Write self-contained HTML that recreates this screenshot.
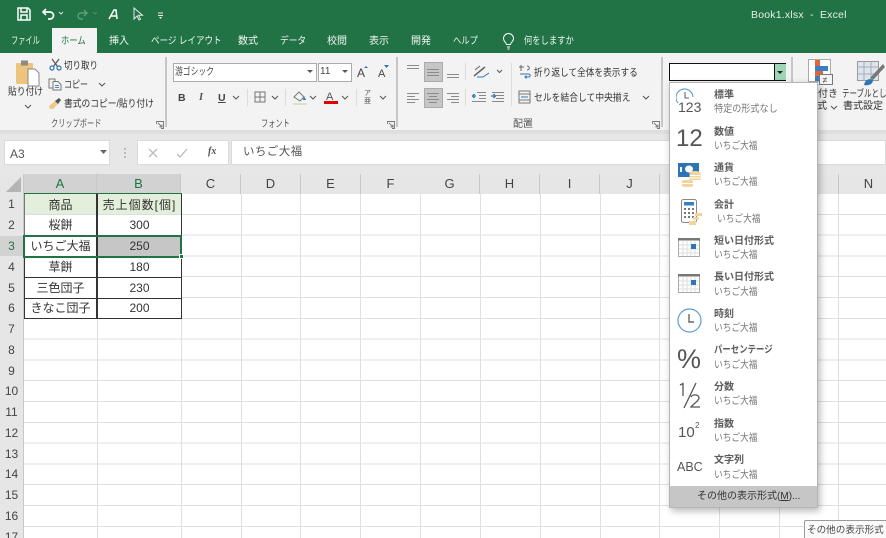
<!DOCTYPE html>
<html lang="ja"><head><meta charset="utf-8"><title>Book1.xlsx - Excel</title>
<style>
html,body{margin:0;padding:0;background:#fff}
#r{position:relative;width:886px;height:538px;overflow:hidden;background:#fff;font-family:"Liberation Sans","Noto Sans CJK JP",sans-serif;font-size:10px;color:#333;filter:blur(.3px)}
#r div,#r svg{position:absolute}
.t{white-space:nowrap;line-height:14px;transform-origin:0 50%}
.tab{color:#fff;top:35px;font-size:10px;height:14px;line-height:14px;white-space:nowrap;opacity:.93;transform-origin:0 50%}
.g{color:#555;top:118px;font-size:10px;line-height:14px;white-space:nowrap;transform-origin:0 50%}
.sep{width:2px;background:#c6c6c6;top:57px;height:70px}
.ss{width:1px;background:#dcdcdc}
.hd{top:174px;height:20px;background:#e6e6e6;border-right:1px solid #c8c8c8;text-align:center;font-size:13px;line-height:20px;color:#444;box-sizing:border-box}
.rh{left:0;width:23px;height:20px;background:#e6e6e6;text-align:center;font-size:12px;line-height:21px;color:#444}
.vl{top:194px;bottom:0;width:1px;background:#dfdfdf}
.c{font-size:12px;line-height:20px;height:20px;text-align:center;color:#333;white-space:nowrap}
.mt{left:714px;font-size:10px;font-weight:700;color:#5c5c5c;line-height:13px;white-space:nowrap;transform-origin:0 50%}
.ms{left:714px;font-size:10px;color:#777;line-height:13px;white-space:nowrap;transform:scaleX(.87);transform-origin:0 50%}
.bk{background:#333}
.gb{background:#217346}
</style></head><body><div id="r">

<!-- title bar -->
<div style="left:0;top:0;width:886px;height:53px;background:#217346"></div>
<svg style="left:16px;top:6px" width="150" height="16" viewBox="0 0 150 16" fill="none">
<path d="M2 2h10l2 2v10H2zM5 2v4h6V2M5 14V9h6v5" stroke="#fff" stroke-width="1.5"/>
<path d="M30 3l-3 3 3 3M27 6h7a3.500 3.500 0 0 1 0 7h-2" stroke="#fff" stroke-width="1.700"/>
<path d="M43 6l2 2 2-2" stroke="#ddd" stroke-width="1"/>
<path d="M68 4l3 3-3 3M71 7h-6a3 3 0 0 0 0 6h2" stroke="#5f9d7c" stroke-width="1.500"/>
<path d="M77 6l2 2 2-2" stroke="#4f8d6c" stroke-width="1"/>
<path d="M93 13l5-9h2l1 9M95 10h5" stroke="#fff" stroke-width="1.500"/>
<path d="M118 2v11l3-3 2 4 1.500-.7-2-4h4z" stroke="#e8e8e8" stroke-width="1"/>
<path d="M142 9.500h5M142 7h5" stroke="#eee" stroke-width="1"/><path d="M143 11h3l-1.500 2z" fill="#eee"/>
</svg>
<div class="t" style="left:751px;top:8px;color:#e5efe9;font-size:10.500px;letter-spacing:.2px">Book1.xlsx&nbsp; - &nbsp;Excel</div>

<!-- tabs -->
<div class="tab" style="left:11px;transform:scaleX(.72)">ファイル</div>
<div style="left:52px;top:28px;width:45px;height:25px;background:#f3f3f3"></div>
<div class="tab" style="left:61px;color:#217346;opacity:1;transform:scaleX(.83)">ホーム</div>
<div class="tab" style="left:109px">挿入</div>
<div class="tab" style="left:151px;transform:scaleX(.855)">ページ レイアウト</div>
<div class="tab" style="left:238px">数式</div>
<div class="tab" style="left:280px;transform:scaleX(.87)">データ</div>
<div class="tab" style="left:327px">校閲</div>
<div class="tab" style="left:369px">表示</div>
<div class="tab" style="left:411px">開発</div>
<div class="tab" style="left:453px;transform:scaleX(.83)">ヘルプ</div>
<svg style="left:502px;top:33px" width="14" height="17" viewBox="0 0 14 17" fill="none"><path d="M4.500 11.500C4 9 1.500 8.500 1.500 5.500a5 5 0 0 1 10 0C11.500 8.500 9 9 8.500 11.500zM5 14h3M5.500 16h2" stroke="#fff" stroke-width="1"/></svg>
<div class="tab" style="left:524px;transform:scaleX(.83)">何をしますか</div>

<!-- ribbon -->
<div style="left:0;top:53px;width:886px;height:77px;background:#f3f3f3"></div>
<div style="left:0;top:130px;width:886px;height:44px;background:#e7e7e7"></div>
<div style="left:0;top:130px;width:886px;height:4px;background:#dedede"></div>
<div class="sep" style="left:165px"></div>
<div class="sep" style="left:396px"></div>
<div class="sep" style="left:661px"></div>
<div class="sep" style="left:791px"></div>

<!-- clipboard -->
<svg style="left:15px;top:59px" width="26" height="28" viewBox="0 0 26 28"><rect x="1" y="4" width="17" height="21" fill="#edc47c" rx="1"/><rect x="6" y="1.500" width="7" height="5" fill="#8a8a8a"/><path d="M13 10h7l4 4v13H13z" fill="#fff" stroke="#8a8a8a"/></svg>
<div class="t" style="left:8px;top:87px;transform:scaleX(.875);top:86px;color:#333">貼り付け</div>
<svg style="left:24px;top:104px" width="8" height="5" viewBox="0 0 8 5" fill="none"><path d="M1 1l3 3 3-3" stroke="#555"/></svg>
<svg style="left:49px;top:58px" width="13" height="13" viewBox="0 0 13 13" fill="none"><path d="M3 1l5.500 7.500M10 1L4.500 8.500" stroke="#555" stroke-width="1.200"/><circle cx="3" cy="10" r="2" stroke="#2e75b6" stroke-width="1.200"/><circle cx="10" cy="10" r="2" stroke="#2e75b6" stroke-width="1.200"/></svg>
<div class="t" style="left:64px;top:60px;transform:scaleX(.85);color:#333">切り取り</div>
<svg style="left:48px;top:78px" width="14" height="13" viewBox="0 0 14 13" fill="none"><path d="M1 1h6v9H1z" stroke="#777"/><path d="M5 3.500h5l3 3V12H5z" fill="#f3f3f3" stroke="#777"/><path d="M7 7.500h4M7 9.500h4" stroke="#4a86c5"/></svg>
<div class="t" style="left:64px;top:79px;transform:scaleX(.8);color:#333">コピー</div>
<svg style="left:98px;top:82px" width="8" height="5" viewBox="0 0 8 5" fill="none"><path d="M1 1l3 3 3-3" stroke="#555"/></svg>
<svg style="left:48px;top:97px" width="14" height="13" viewBox="0 0 14 13"><path d="M1 9l6-5 3 3-5 5H2z" fill="#eec98a"/><path d="M7 4l4-3 2 2-3 4z" fill="#555"/></svg>
<div class="t" style="left:64px;top:98px;transform:scaleX(.875);color:#333">書式のコピー/貼り付け</div>
<div class="g" style="left:51px;transform:scaleX(.72)">クリップボード</div>
<svg style="left:156px;top:121px" width="8" height="8" viewBox="0 0 8 8" fill="none"><path d="M.5 3V.5H7.500V7.500H5M2 2l4 4M3.500 6H6V3.500" stroke="#777" stroke-width=".9"/></svg>

<!-- font -->
<div style="left:173px;top:63px;width:142px;height:17px;background:#fff;border:1px solid #ababab"></div>
<div class="t" style="left:175px;top:66px;transform:scaleX(.78);color:#444">游ゴシック</div>
<svg style="left:307px;top:70px" width="6" height="4" viewBox="0 0 6 4"><path d="M0 0h6L3 3z" fill="#555"/></svg>
<div style="left:318px;top:63px;width:32px;height:17px;background:#fff;border:1px solid #ababab"></div>
<div class="t" style="left:320px;top:65px;color:#444">11</div>
<svg style="left:342px;top:70px" width="6" height="4" viewBox="0 0 6 4"><path d="M0 0h6L3 3z" fill="#555"/></svg>
<div class="t" style="left:357px;top:66px;font-size:12px;color:#444">A</div>
<div class="t" style="left:378px;top:67px;font-size:11px;color:#444">A</div>
<svg style="left:363px;top:65px" width="32" height="4" viewBox="0 0 32 4"><path d="M1 3l2-2 2 2zM21 0h5l-2.500 3z" fill="#2e75b6"/></svg>
<div class="t" style="left:178px;top:91px;font-weight:700;font-size:10.500px;color:#444">B</div>
<div class="t" style="left:199px;top:91px;font-style:italic;font-size:10.500px;font-weight:700;color:#555;font-family:'Liberation Serif',serif">I</div>
<div class="t" style="left:218px;top:91px;text-decoration:underline;font-size:10.500px;font-weight:700;color:#444">U</div>
<svg style="left:232px;top:95px" width="8" height="5" viewBox="0 0 8 5" fill="none"><path d="M1 1l3 3 3-3" stroke="#555"/></svg>
<div class="ss" style="left:247px;top:89px;height:17px"></div>
<svg style="left:254px;top:91px" width="12" height="12" viewBox="0 0 12 12" fill="none"><path d="M1 1h10v10H1zM6 1v10M1 6h10" stroke="#777"/></svg>
<svg style="left:271px;top:95px" width="8" height="5" viewBox="0 0 8 5" fill="none"><path d="M1 1l3 3 3-3" stroke="#555"/></svg>
<div class="ss" style="left:285px;top:89px;height:17px"></div>
<svg style="left:292px;top:90px" width="16" height="15" viewBox="0 0 16 15" fill="none"><path d="M2 7l5-5 5 5-4 4z" stroke="#777"/><path d="M12 6l2 4h-3z" fill="#2e75b6"/><rect x="1" y="13" width="14" height="2" fill="#d6e4c4"/></svg>
<svg style="left:309px;top:95px" width="8" height="5" viewBox="0 0 8 5" fill="none"><path d="M1 1l3 3 3-3" stroke="#555"/></svg>
<div class="t" style="left:326px;top:90px;font-size:11px;color:#555">A</div>
<div style="left:324px;top:101px;width:14px;height:3px;background:#e00000"></div>
<svg style="left:341px;top:95px" width="8" height="5" viewBox="0 0 8 5" fill="none"><path d="M1 1l3 3 3-3" stroke="#555"/></svg>
<div class="ss" style="left:356px;top:89px;height:17px"></div>
<div class="t" style="left:364px;top:90px;font-size:7px;line-height:8px;color:#555">ア<br>亜</div>
<svg style="left:379px;top:95px" width="8" height="5" viewBox="0 0 8 5" fill="none"><path d="M1 1l3 3 3-3" stroke="#555"/></svg>
<div class="g" style="left:261px;transform:scaleX(.72)">フォント</div>
<svg style="left:387px;top:121px" width="8" height="8" viewBox="0 0 8 8" fill="none"><path d="M.5 3V.5H7.500V7.500H5M2 2l4 4M3.500 6H6V3.500" stroke="#777" stroke-width=".9"/></svg>

<!-- alignment -->
<div style="left:424px;top:62px;width:17px;height:18px;background:#c6c6c6;border:1px solid #ababab"></div>
<div style="left:424px;top:88px;width:17px;height:18px;background:#c6c6c6;border:1px solid #ababab"></div>
<svg style="left:405px;top:62px" width="65" height="46" viewBox="0 0 65 46" fill="none" stroke="#8a8a8a">
<path d="M2 3.500h12M2 6.500h12"/>
<path d="M22 7.500h12M22 10.500h12M22 13.500h12"/>
<path d="M42 12.500h12M42 15.500h12"/>
<path d="M2 31.500h12M2 34.500h8M2 37.500h12M2 40.500h8"/>
<path d="M22 31.500h12M24 34.500h8M22 37.500h12M24 40.500h8"/>
<path d="M42 31.500h12M46 34.500h8M42 37.500h12M46 40.500h8"/>
</svg>
<div class="ss" style="left:465px;top:63px;height:17px"></div>
<div class="ss" style="left:465px;top:89px;height:17px"></div>
<svg style="left:472px;top:63px" width="32" height="16" viewBox="0 0 32 16" fill="none"><path d="M2 13L13 4" stroke="#666" stroke-width="1.500"/><path d="M3 7l5-4M7 9l3-3" stroke="#666"/><path d="M5 14h6l6-4" stroke="#2e75b6"/><path d="M25 7l2.500 2.500L30 7" stroke="#555"/></svg>
<svg style="left:471px;top:91px" width="34" height="13" viewBox="0 0 34 13" fill="none" stroke="#888"><path d="M6 1.500h9M8 4.500h7M8 7.500h7M1 10.500h14"/><path d="M5 5H1.500M3.500 3L1.500 5l2 2" stroke="#2e75b6" stroke-width="1.300"/><path d="M21 1.500h12M25 4.500h8M25 7.500h8M21 10.500h12"/><path d="M20 5h4M22.500 3l2 2-2 2" stroke="#2e75b6" stroke-width="1.300"/></svg>
<div class="ss" style="left:511px;top:63px;height:43px"></div>
<svg style="left:518px;top:64px" width="14" height="15" viewBox="0 0 14 15" fill="none"><path d="M3 1v6M6 3H1M9 2c3 0 3 4 0 4" stroke="#666"/><path d="M2 10h8c3 0 3 3 0 3H7M8.500 11.500L7 13l1.500 1.500" stroke="#2e75b6"/></svg>
<div class="t" style="left:534px;top:67px;transform:scaleX(.867);color:#333">折り返して全体を表示する</div>
<svg style="left:518px;top:90px" width="13" height="14" viewBox="0 0 13 14" fill="none"><path d="M1 1h11v12H1zM1 4h11M1 10h11" stroke="#777"/><path d="M3 7h7" stroke="#2e75b6"/></svg>
<div class="t" style="left:534px;top:92px;transform:scaleX(.88);color:#333">セルを結合して中央揃え</div>
<svg style="left:642px;top:95px" width="8" height="5" viewBox="0 0 8 5" fill="none"><path d="M1 1l3 3 3-3" stroke="#555"/></svg>
<div class="g" style="left:513px">配置</div>
<svg style="left:652px;top:121px" width="8" height="8" viewBox="0 0 8 8" fill="none"><path d="M.5 3V.5H7.500V7.500H5M2 2l4 4M3.500 6H6V3.500" stroke="#777" stroke-width=".9"/></svg>

<!-- styles -->
<svg style="left:808px;top:59px" width="24" height="24" viewBox="0 0 24 24"><path d="M.5.500h22v22H.5z" fill="#fff" stroke="#aaa"/><rect x="7" y="1" width="5" height="6" fill="#e0653a"/><rect x="7" y="7" width="13" height="5" fill="#3a7fc4"/><rect x="7" y="12" width="8" height="5" fill="#e0653a"/><rect x="7" y="17" width="5" height="5" fill="#3a7fc4"/></svg>
<svg style="left:819px;top:74px" width="14" height="11" viewBox="0 0 14 11"><rect x=".5" y=".5" width="13" height="10" fill="#f5f5f5" stroke="#777"/><text x="3.500" y="9" font-size="9" fill="#444">≠</text></svg>
<svg style="left:857px;top:61px" width="29" height="26" viewBox="0 0 29 26" fill="none"><path d="M.5.500h21v19H.5z" fill="#dce4ec" stroke="#999"/><path d="M7 .5v19M14 .5v19M.5 6h21M.5 13h21" stroke="#aab"/><path d="M26 3L13 17l3 2L28 6z" fill="#777"/><path d="M7 24c1-6 6-7 9-5 0 4-4 6-9 5z" fill="#2e75b6"/></svg>
<div class="t" style="left:798px;top:88px;color:#333">条件付き</div>
<div class="t" style="left:807px;top:100px;color:#333">書式</div>
<svg style="left:830px;top:105px" width="8" height="5" viewBox="0 0 8 5" fill="none"><path d="M1 1l3 3 3-3" stroke="#555"/></svg>
<div class="t" style="left:842px;top:88px;transform:scaleX(.75);color:#333">テーブルとして</div>
<div class="t" style="left:843px;top:100px;color:#333">書式設定</div>

<!-- formula bar -->
<div style="left:4px;top:140px;width:106px;height:25px;background:#fff;border:1px solid #dadada;box-sizing:border-box"></div>
<div class="t" style="left:10px;top:147px;font-size:12px;color:#555">A3</div>
<svg style="left:100px;top:150px" width="7" height="4" viewBox="0 0 7 4"><path d="M0 0h7L3.500 4z" fill="#666"/></svg>
<div style="left:124px;top:148px;width:2px;height:2px;background:#bbb"></div>
<div style="left:124px;top:152px;width:2px;height:2px;background:#bbb"></div>
<div style="left:124px;top:156px;width:2px;height:2px;background:#bbb"></div>
<div style="left:137px;top:140px;width:92px;height:25px;background:#fff;border:1px solid #dadada;box-sizing:border-box"></div>
<svg style="left:147px;top:147px" width="50" height="12" viewBox="0 0 50 12" fill="none"><path d="M2 2l8 8M10 2l-8 8" stroke="#bbb" stroke-width="1.300"/><path d="M30 7l3 3 7-8" stroke="#bbb" stroke-width="1.300"/></svg>
<div class="t" style="left:208px;top:145px;font-family:'Liberation Serif',serif;font-style:italic;font-weight:700;font-size:10px;color:#555">fx</div>
<div style="left:231px;top:140px;width:655px;height:25px;background:#fff;border:1px solid #dadada;box-sizing:border-box"></div>
<div class="t" style="left:243px;top:145px;font-size:11.500px;color:#555;letter-spacing:.4px">いちご大福</div>

<!-- grid -->
<div style="left:24px;top:194px;width:862px;height:344px;background:repeating-linear-gradient(to bottom,#fff 0,#fff 19.800px,#dfdfdf 19.800px,#dfdfdf 20.800px)"></div>
<div class="vl" style="left:97px"></div><div class="vl" style="left:181px"></div><div class="vl" style="left:241px"></div><div class="vl" style="left:300px"></div><div class="vl" style="left:360px"></div><div class="vl" style="left:420px"></div><div class="vl" style="left:480px"></div><div class="vl" style="left:540px"></div><div class="vl" style="left:600px"></div><div class="vl" style="left:659px"></div><div class="vl" style="left:719px"></div><div class="vl" style="left:779px"></div><div class="vl" style="left:838px"></div>

<!-- column headers -->
<div style="left:0;top:174px;width:886px;height:20px;background:#e6e6e6"></div>
<svg style="left:6px;top:177px" width="16" height="15" viewBox="0 0 16 15"><path d="M15 0v15H0z" fill="#b4b4b4"/></svg>
<div class="hd" style="left:24px;width:73px;background:#d2d2d2;color:#217346;border-bottom:1px solid #217346">A</div>
<div class="hd" style="left:97px;width:84px;background:#d2d2d2;color:#217346;border-bottom:1px solid #217346">B</div>
<div class="hd" style="left:181px;width:60px">C</div><div class="hd" style="left:241px;width:60px">D</div><div class="hd" style="left:301px;width:60px">E</div><div class="hd" style="left:361px;width:60px">F</div><div class="hd" style="left:420px;width:60px">G</div><div class="hd" style="left:480px;width:60px">H</div><div class="hd" style="left:540px;width:60px">I</div><div class="hd" style="left:600px;width:60px">J</div><div class="hd" style="left:660px;width:60px">K</div><div class="hd" style="left:719px;width:60px">L</div><div class="hd" style="left:779px;width:60px">M</div><div class="hd" style="left:839px;width:60px">N</div>

<!-- row headers -->
<div style="left:0;top:194px;width:23px;height:344px;background:#e6e6e6"></div>
<div style="left:23px;top:174px;width:1px;height:364px;background:#c8c8c8"></div>
<div class="rh" style="top:194px">1</div><div class="rh" style="top:215px">2</div><div class="rh" style="top:236px;background:#d2d2d2;color:#217346">3</div><div class="rh" style="top:257px">4</div><div class="rh" style="top:278px">5</div><div class="rh" style="top:298px">6</div><div class="rh" style="top:319px">7</div><div class="rh" style="top:340px">8</div><div class="rh" style="top:361px">9</div><div class="rh" style="top:381px">10</div><div class="rh" style="top:402px">11</div><div class="rh" style="top:423px">12</div><div class="rh" style="top:444px">13</div><div class="rh" style="top:464px">14</div><div class="rh" style="top:485px">15</div><div class="rh" style="top:506px">16</div><div class="rh" style="top:527px">17</div>

<!-- table -->
<div style="left:24px;top:194px;width:157px;height:20px;background:#e2efda"></div>
<div style="left:98px;top:237px;width:83px;height:19px;background:#c6c6c6"></div>
<div style="left:24px;top:215px;width:73px;height:20px;background:#fff"></div><div style="left:98px;top:215px;width:83px;height:20px;background:#fff"></div>
<div style="left:24px;top:236px;width:73px;height:20px;background:#fff"></div>
<div style="left:24px;top:257px;width:157px;height:62px;background:#fff"></div>
<div style="left:24px;top:214px;width:157px;height:1px;background:#ddd"></div>
<div class="bk" style="left:24px;top:277px;width:157px;height:1px"></div>
<div class="bk" style="left:24px;top:298px;width:157px;height:1px"></div>
<div class="bk" style="left:24px;top:318px;width:158px;height:1px"></div>
<div style="left:24px;top:194px;width:1px;height:42px;background:#777"></div>
<div class="bk" style="left:24px;top:257px;width:1px;height:62px"></div>
<div class="bk" style="left:96px;top:194px;width:2px;height:125px"></div>
<div class="bk" style="left:181px;top:194px;width:1px;height:125px"></div>
<div class="gb" style="left:24px;top:193px;width:158px;height:1px"></div>
<div class="gb" style="left:23px;top:235px;width:159px;height:2px"></div>
<div class="gb" style="left:23px;top:256px;width:159px;height:2px"></div>
<div class="gb" style="left:23px;top:235px;width:2px;height:23px"></div>
<div class="gb" style="left:180px;top:235px;width:2px;height:23px"></div>
<div style="left:179px;top:254px;background:#217346;border:1px solid #fff;width:3px;height:3px"></div>

<div class="c" style="left:24px;width:73px;top:195px;">商品</div><div class="c" style="left:98px;width:83px;top:195px;letter-spacing:1px">売上個数[個]</div>
<div class="c" style="left:24px;width:73px;top:215px;">桜餅</div><div class="c" style="left:98px;width:83px;top:215px;">300</div>
<div class="c" style="left:24px;width:73px;top:236px;">いちご大福</div><div class="c" style="left:98px;width:83px;top:236px;">250</div>
<div class="c" style="left:24px;width:73px;top:257px;">草餅</div><div class="c" style="left:98px;width:83px;top:257px;">180</div>
<div class="c" style="left:24px;width:73px;top:278px;">三色団子</div><div class="c" style="left:98px;width:83px;top:278px;">230</div>
<div class="c" style="left:24px;width:73px;top:298px;">きなこ団子</div><div class="c" style="left:98px;width:83px;top:298px;">200</div>

<!-- number format combobox -->
<div style="left:669px;top:63px;width:117px;height:18px;background:#fff;border:1px solid #111;box-sizing:border-box"></div>
<div style="left:774px;top:64px;width:11px;height:16px;background:#9fd5b7;border-left:1px solid #111"></div>
<svg style="left:777px;top:71px" width="6" height="4" viewBox="0 0 6 4"><path d="M0 0h6L3 3z" fill="#222"/></svg>

<!-- dropdown -->
<div style="left:669px;top:82px;width:149px;height:426px;background:#fff;border:1px solid #b5b5b5;box-sizing:border-box;box-shadow:2px 3px 7px rgba(0,0,0,.28)"></div>
<div style="left:670px;top:486px;width:147px;height:21px;background:#c6c6c6"></div>

<svg style="left:676px;top:88px" width="28" height="28" viewBox="0 0 28 28" fill="none"><path d="M2 15a8.500 8.500 0 1 1 15 -6" stroke="#5b9bd5" stroke-width="1.100"/><path d="M9 4v6h4" stroke="#666" stroke-width="1.100"/></svg>
<div class="t" style="left:678px;top:99px;font-size:14px;line-height:16px;color:#555">123</div>
<div class="mt" style="top:89px">標準</div><div class="ms" style="top:103px;transform:scaleX(.91)">特定の形式なし</div>

<div class="t" style="left:676px;top:125px;font-size:24px;line-height:28px;color:#555">12</div>
<div class="mt" style="top:126px">数値</div><div class="ms" style="top:140px">いちご大福</div>

<svg style="left:677px;top:162px" width="26" height="27" viewBox="0 0 26 27"><rect x="1" y="1" width="21" height="14" fill="#2e75b6"/><ellipse cx="12" cy="7" rx="4" ry="3.500" fill="#fff"/><rect x="3" y="5" width="2" height="5" fill="#fff"/><ellipse cx="18" cy="11" rx="5.500" ry="2" fill="#f2d49c"/><rect x="12.500" y="11" width="11" height="7" fill="#f2d49c"/><path d="M13 13.500h10M13 16h10" stroke="#fff"/><rect x="5" y="18" width="11" height="7" rx="2" fill="#f2d49c"/><path d="M5 21.500h11" stroke="#fff"/></svg>
<div class="mt" style="top:162px">通貨</div><div class="ms" style="top:176px">いちご大福</div>

<svg style="left:680px;top:199px" width="24" height="27" viewBox="0 0 24 27"><rect x="1.500" y=".5" width="15" height="23" rx="2" fill="#fff" stroke="#888"/><rect x="4" y="3" width="10" height="3.500" fill="#3a7fc4"/><path d="M4 9h2v2H4zM8 9h2v2H8zM12 9h2v2h-2zM4 13h2v2H4zM8 13h2v2H8zM12 13h2v2h-2zM4 17h2v2H4zM8 17h2v2H8zM12 17h2v2h-2z" fill="#777"/><rect x="15" y="14" width="7" height="3" fill="#f2d49c"/><rect x="13" y="18" width="6" height="2.500" fill="#f2d49c"/><rect x="9" y="22" width="7" height="4" fill="#f2d49c"/></svg>
<div class="mt" style="top:199px">会計</div><div class="ms" style="top:213px;left:717px">いちご大福</div>

<svg style="left:678px;top:238px" width="23" height="22" viewBox="0 0 23 22"><rect x=".5" y=".5" width="21" height="18" fill="#fff" stroke="#aaa"/><rect x="0" y="0" width="22" height="2.500" fill="#777"/><path d="M5 3v15M9 3v15M13 3v15M17 3v15M1 7h20M1 11h20M1 15h20" stroke="#ddd"/><rect x="13" y="6" width="5" height="5" fill="#2e75b6"/></svg>
<div class="mt" style="top:235px">短い日付形式</div><div class="ms" style="top:249px">いちご大福</div>

<svg style="left:678px;top:274px" width="23" height="22" viewBox="0 0 23 22"><rect x=".5" y=".5" width="21" height="18" fill="#fff" stroke="#aaa"/><rect x="0" y="0" width="22" height="2.500" fill="#777"/><path d="M5 3v15M9 3v15M13 3v15M17 3v15M1 7h20M1 11h20M1 15h20" stroke="#ddd"/><rect x="13" y="6" width="5" height="5" fill="#2e75b6"/></svg>
<div class="mt" style="top:271px">長い日付形式</div><div class="ms" style="top:286px">いちご大福</div>

<svg style="left:677px;top:308px" width="25" height="25" viewBox="0 0 25 25" fill="none"><circle cx="12.500" cy="12.500" r="11.500" stroke="#5b9bd5" stroke-width="1.200"/><path d="M12 6v8h5" stroke="#666" stroke-width="1.400"/></svg>
<div class="mt" style="top:308px">時刻</div><div class="ms" style="top:322px">いちご大福</div>

<div class="t" style="left:677px;top:344px;font-size:27px;line-height:30px;color:#555">%</div>
<div class="mt" style="top:344px;transform:scaleX(.84)">パーセンテージ</div><div class="ms" style="top:359px">いちご大福</div>

<svg style="left:677px;top:382px" width="26" height="27" viewBox="0 0 26 27" fill="none" stroke="#555" stroke-width="1.300"><path d="M3 3l3-1.500V14" /><path d="M19 1L7 26"/><path d="M14 15c1-3 8-3 8 1 0 3-6 6-8 9h9"/></svg>
<div class="mt" style="top:381px">分数</div><div class="ms" style="top:395px">いちご大福</div>

<div class="t" style="left:678px;top:424px;font-size:15px;line-height:18px;color:#555">10</div>
<div class="t" style="left:695px;top:421px;font-size:8px;line-height:10px;color:#555">2</div>
<div class="mt" style="top:418px">指数</div><div class="ms" style="top:432px">いちご大福</div>

<div class="t" style="left:677px;top:459px;font-size:12.500px;line-height:16px;color:#555">ABC</div>
<div class="mt" style="top:454px">文字列</div><div class="ms" style="top:469px">いちご大福</div>

<div class="t" style="left:697px;top:490px;color:#333">その他の表示形式(<u>M</u>)...</div>

<!-- tooltip -->
<div style="left:804px;top:520px;width:86px;height:24px;background:#fafafa;border:1px solid #999;border-radius:2px;box-sizing:border-box"></div>
<div class="t" style="left:807px;top:524px;font-size:9.600px;color:#444">その他の表示形式</div>

</div></body></html>
